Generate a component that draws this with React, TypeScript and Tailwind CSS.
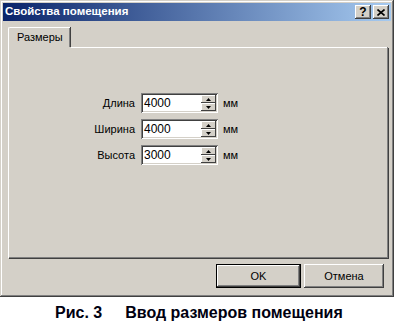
import React from "react";

const raised =
  "shadow-[inset_-1px_-1px_#404040,inset_1px_1px_#ffffff,inset_-2px_-2px_#808080,inset_2px_2px_#d4d0c8]";
const sunken =
  "shadow-[inset_1px_1px_#808080,inset_-1px_-1px_#ffffff,inset_2px_2px_#404040,inset_-2px_-2px_#d4d0c8]";

function SpinBtn({ up }: { up: boolean }) {
  return (
    <div
      className={`w-[15px] h-[8px] bg-[#d4d0c8] flex items-center justify-center shadow-[inset_-1px_-1px_#404040,inset_1px_1px_#ffffff]`}
    >
      <svg width="5" height="3" viewBox="0 0 5 3">
        {up ? (
          <polygon points="2.5,0 5,3 0,3" fill="#000" />
        ) : (
          <polygon points="0,0 5,0 2.5,3" fill="#000" />
        )}
      </svg>
    </div>
  );
}

function Row({ label, value }: { label: string; value: string }) {
  return (
    <div className="flex items-center h-[20px]">
      <div className="w-[58px] text-right pr-[6px]">{label}</div>
      <div className={`w-[77px] h-[20px] bg-white ${sunken} flex items-center pl-[3px] pr-[2px]`}>
        <span className="flex-1 text-[12px] leading-none">{value}</span>
        <div className="flex flex-col gap-0 mr-[0px]">
          <SpinBtn up />
          <SpinBtn up={false} />
        </div>
      </div>
      <div className="pl-[5px]">мм</div>
    </div>
  );
}

export default function App() {
  return (
    <div
      className="w-[395px] h-[334px] bg-white relative overflow-hidden text-[11px] text-black"
      style={{ fontFamily: '"Liberation Sans", Arial, sans-serif' }}
    >
      <div
        className={`w-[394px] h-[297px] bg-[#d4d0c8] p-[3px] flex flex-col shadow-[inset_-1px_-1px_#404040,inset_1px_1px_#d4d0c8,inset_-2px_-2px_#808080,inset_2px_2px_#ffffff]`}
      >
        {/* Title bar */}
        <div className="h-[18px] flex items-center pl-[2px] pr-[2px] bg-[linear-gradient(to_right,#0a246a,#a6caf0)]">
          <span className="text-white font-bold text-[11.5px] leading-none flex-1">
            Свойства помещения
          </span>
          <div className={`w-[16px] h-[14px] bg-[#d4d0c8] ${raised} flex items-center justify-center font-bold text-[12px] leading-none`}>
            ?
          </div>
          <div className={`w-[16px] h-[14px] ml-[2px] bg-[#d4d0c8] ${raised} flex items-center justify-center`}>
            <svg width="8" height="7" viewBox="0 0 8 7">
              <path d="M0.5 0.5 L7.5 6.5 M7.5 0.5 L0.5 6.5" stroke="#000" strokeWidth="1.6" />
            </svg>
          </div>
        </div>
        {/* Body */}
        <div className="flex-1 flex flex-col pl-[5px] pr-[3px] pt-[6px]">
          <div className="flex">
            <div className="w-[62px] h-[20px] relative bg-[#d4d0c8] border-l border-t border-white rounded-tl-[2px] shadow-[inset_-1px_0_#808080,1px_0_#404040] flex items-center pl-[8px]">
              Размеры
            </div>
          </div>
          <div className="h-[211px] border-l border-white shadow-[inset_-1px_-1px_#808080,1px_1px_#404040] relative">
            <div className="absolute top-0 left-[62px] right-[1px] h-px bg-white" />
            <div className="flex flex-col gap-[6px] pl-[74px] pt-[46px]">
              <Row label="Длина" value="4000" />
              <Row label="Ширина" value="4000" />
              <Row label="Высота" value="3000" />
            </div>
          </div>
          <div className="flex justify-end gap-[3px] mt-[6px] pr-[4px]">
            <div className="w-[85px] h-[24px] border border-black">
              <div className={`w-full h-full ${raised} flex items-center justify-center`}>OK</div>
            </div>
            <div className={`w-[80px] h-[24px] ${raised} flex items-center justify-center`}>
              Отмена
            </div>
          </div>
        </div>
      </div>
      <div className="flex justify-start mt-[4px] text-[16px] font-bold text-[#000010] pl-[55px]">
        <span>Рис. 3</span>
        <span className="ml-[23px]">Ввод размеров помещения</span>
      </div>
    </div>
  );
}
